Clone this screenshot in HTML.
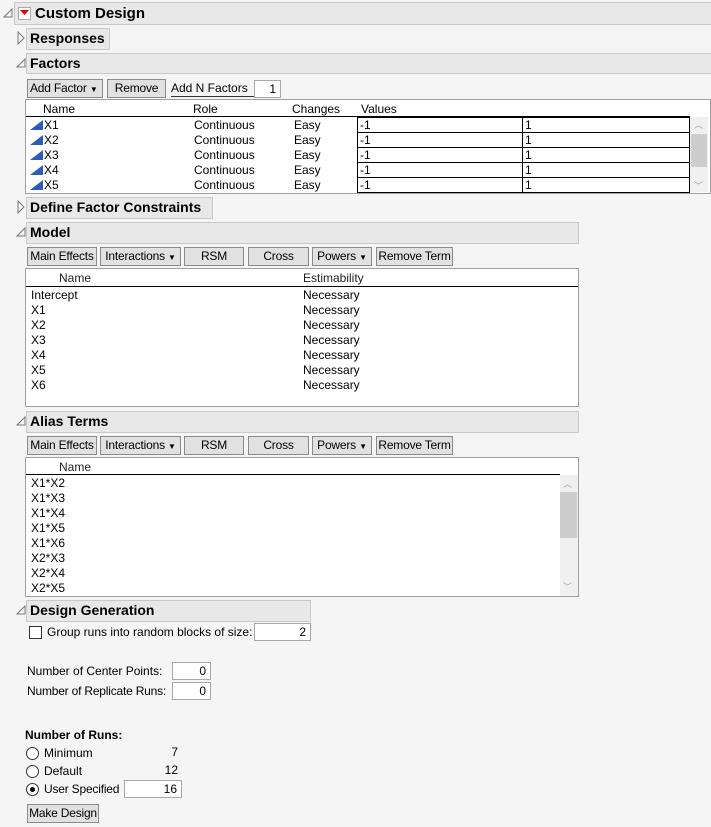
<!DOCTYPE html>
<html><head><meta charset="utf-8"><style>
*{box-sizing:border-box}
body{margin:0;width:711px;height:827px;background:#f5f5f5;font-family:"Liberation Sans",sans-serif;font-size:12px;color:#000;position:relative;overflow:hidden}
.a{position:absolute;white-space:nowrap}
.hdr{position:absolute;background:#e8e8e8;border:1px solid #c8c8c8;font-weight:bold;font-size:14px;padding-left:3px;line-height:19px;white-space:nowrap}
.btn{position:absolute;background:#e1e1e1;border:1px solid #8a8a8a;height:19px;line-height:17px;text-align:center;font-size:12px;white-space:nowrap;overflow:hidden;letter-spacing:-0.2px}
.box{position:absolute;background:#fff;border:1px solid #a0a0a0}
.inp{position:absolute;background:#fff;border:1px solid #a8a8a8;height:18px;line-height:16px;text-align:right;padding-right:4px;white-space:nowrap}
.sb{position:absolute;background:#f0f0f0}
.th{position:absolute;background:#cdcdcd}
.chev{position:absolute;color:#a0a0a0;font-size:9px}
</style></head><body>

<svg class="a" style="left:3px;top:8px" width="10" height="10"><path d="M1 9 L9 9 L9 1 Z" fill="none" stroke="#777"/></svg>
<div class="hdr" style="left:14px;top:2px;width:700px;height:23px;padding-left:20px;font-size:15px;line-height:22px">Custom Design</div>
<div class="a" style="left:18px;top:7px;width:13px;height:13px;border:1px solid #aaa;background:#fff"></div>
<svg class="a" style="left:20px;top:10px" width="9" height="6"><path d="M0 0 L9 0 L4.5 5 Z" fill="#d00"/></svg>

<svg class="a" style="left:17px;top:31px" width="8" height="14"><path d="M1 1 L7 7 L1 13 Z" fill="none" stroke="#777"/></svg>
<div class="hdr" style="left:26px;top:28px;width:84px;height:22px">Responses</div>

<svg class="a" style="left:16px;top:58px" width="10" height="10"><path d="M1 9 L9 9 L9 1 Z" fill="none" stroke="#777"/></svg>
<div class="hdr" style="left:26px;top:53px;width:690px;height:21px">Factors</div>
<div class="btn" style="left:27px;top:79px;width:76px;text-align:left;padding-left:2px">Add Factor <span style="font-size:8px">▼</span></div>
<div class="btn" style="left:107px;top:79px;width:59px">Remove</div>
<div class="a" style="left:171px;top:81px;border-bottom:1px solid #333;width:83px;line-height:15px">Add N Factors</div>
<div class="inp" style="left:254px;top:80px;width:27px">1</div>

<div class="box" style="left:25px;top:99px;width:686px;height:95px"></div>
<div class="a" style="left:43px;top:102px">Name</div>
<div class="a" style="left:193px;top:102px">Role</div>
<div class="a" style="left:292px;top:102px">Changes</div>
<div class="a" style="left:361px;top:102px">Values</div>
<div class="a" style="left:26px;top:116px;width:664px;border-top:1px solid #000"></div>
<div id="frows"></div>
<div class="sb" style="left:690px;top:117px;width:18px;height:75px"></div>
<div class="th" style="left:691px;top:134px;width:16px;height:33px"></div>
<div class="chev" style="left:694px;top:118px">︿</div>
<div class="chev" style="left:694px;top:179px">﹀</div>

<svg class="a" style="left:17px;top:200px" width="8" height="14"><path d="M1 1 L7 7 L1 13 Z" fill="none" stroke="#777"/></svg>
<div class="hdr" style="left:26px;top:197px;width:187px;height:22px">Define Factor Constraints</div>

<svg class="a" style="left:16px;top:227px" width="10" height="10"><path d="M1 9 L9 9 L9 1 Z" fill="none" stroke="#777"/></svg>
<div class="hdr" style="left:26px;top:222px;width:553px;height:22px">Model</div>
<div id="mb1"></div>
<div class="box" style="left:25px;top:268px;width:554px;height:139px"></div>
<div class="a" style="left:59px;top:271px;color:#222">Name</div>
<div class="a" style="left:303px;top:271px;color:#222">Estimability</div>
<div class="a" style="left:26px;top:286px;width:552px;border-top:1px solid #000"></div>
<div id="mrows"></div>

<svg class="a" style="left:16px;top:416px" width="10" height="10"><path d="M1 9 L9 9 L9 1 Z" fill="none" stroke="#777"/></svg>
<div class="hdr" style="left:26px;top:411px;width:553px;height:22px">Alias Terms</div>
<div id="mb2"></div>
<div class="box" style="left:25px;top:457px;width:554px;height:140px"></div>
<div class="a" style="left:59px;top:460px;color:#222">Name</div>
<div class="a" style="left:26px;top:474px;width:534px;border-top:1px solid #000"></div>
<div id="arows"></div>
<div class="sb" style="left:560px;top:475px;width:18px;height:121px"></div>
<div class="th" style="left:560px;top:492px;width:17px;height:46px"></div>
<div class="chev" style="left:563px;top:477px">︿</div>
<div class="chev" style="left:563px;top:580px">﹀</div>

<svg class="a" style="left:16px;top:605px" width="10" height="10"><path d="M1 9 L9 9 L9 1 Z" fill="none" stroke="#777"/></svg>
<div class="hdr" style="left:26px;top:600px;width:285px;height:22px">Design Generation</div>
<div class="a" style="left:29px;top:626px;width:13px;height:13px;border:1px solid #333;background:#fff"></div>
<div class="a" style="left:47px;top:625px">Group runs into random blocks of size:</div>
<div class="inp" style="left:254px;top:623px;width:57px">2</div>

<div class="a" style="left:27px;top:664px">Number of Center Points:</div>
<div class="inp" style="left:172px;top:662px;width:39px">0</div>
<div class="a" style="left:27px;top:684px;letter-spacing:-0.2px">Number of Replicate Runs:</div>
<div class="inp" style="left:172px;top:682px;width:39px">0</div>

<div class="a" style="left:25px;top:728px;font-weight:bold">Number of Runs:</div>
<div class="a" style="left:26px;top:747px;width:13px;height:13px;border:1px solid #333;border-radius:50%;background:#fff"></div>
<div class="a" style="left:44px;top:746px">Minimum</div>
<div class="a" style="left:150px;top:745px;width:28px;text-align:right">7</div>
<div class="a" style="left:26px;top:765px;width:13px;height:13px;border:1px solid #333;border-radius:50%;background:#fff"></div>
<div class="a" style="left:44px;top:764px">Default</div>
<div class="a" style="left:150px;top:763px;width:28px;text-align:right">12</div>
<div class="a" style="left:26px;top:783px;width:13px;height:13px;border:1px solid #333;border-radius:50%;background:#fff"></div>
<div class="a" style="left:30px;top:787px;width:5px;height:5px;border-radius:50%;background:#000"></div>
<div class="a" style="left:44px;top:782px;letter-spacing:-0.2px">User Specified</div>
<div class="inp" style="left:124px;top:780px;width:58px">16</div>
<div class="btn" style="left:27px;top:804px;width:72px">Make Design</div>

<script>
var h='';
for(var i=0;i<5;i++){var y=117+i*15;
h+='<svg class="a" style="left:30px;top:'+(y+3)+'px" width="13" height="10"><path d="M0 10 L13 10 L13 0 Z" fill="#2a5cb8"/></svg>';
h+='<div class="a" style="left:44px;top:'+(y+1)+'px">X'+(i+1)+'</div>';
h+='<div class="a" style="left:194px;top:'+(y+1)+'px">Continuous</div>';
h+='<div class="a" style="left:294px;top:'+(y+1)+'px">Easy</div>';
h+='<div class="a" style="left:357px;top:'+y+'px;width:333px;height:16px;border:1px solid #000"></div>';
h+='<div class="a" style="left:522px;top:'+y+'px;height:16px;border-left:1px solid #000"></div>';
h+='<div class="a" style="left:360px;top:'+(y+1)+'px">-1</div><div class="a" style="left:525px;top:'+(y+1)+'px">1</div>';}
document.getElementById('frows').innerHTML=h;
h='';var n=['Intercept','X1','X2','X3','X4','X5','X6'];
for(i=0;i<7;i++){var y=288+i*15;h+='<div class="a" style="left:31px;top:'+y+'px">'+n[i]+'</div><div class="a" style="left:303px;top:'+y+'px">Necessary</div>';}
document.getElementById('mrows').innerHTML=h;
h='';n=['X1*X2','X1*X3','X1*X4','X1*X5','X1*X6','X2*X3','X2*X4','X2*X5'];
for(i=0;i<8;i++){var y=476+i*15;h+='<div class="a" style="left:31px;top:'+y+'px">'+n[i]+'</div>';}
document.getElementById('arows').innerHTML=h;
function btns(top){var b=[['Main Effects',27,70],['Interactions <span style="font-size:8px">▼</span>',100,81],['RSM',184,60],['Cross',248,61],['Powers <span style="font-size:8px">▼</span>',312,60],['Remove Term',376,77]];
var s='';b.forEach(function(x){s+='<div class="btn" style="left:'+x[1]+'px;top:'+top+'px;width:'+x[2]+'px">'+x[0]+'</div>';});return s;}
document.getElementById('mb1').innerHTML=btns(247);
document.getElementById('mb2').innerHTML=btns(436);
</script>
</body></html>
